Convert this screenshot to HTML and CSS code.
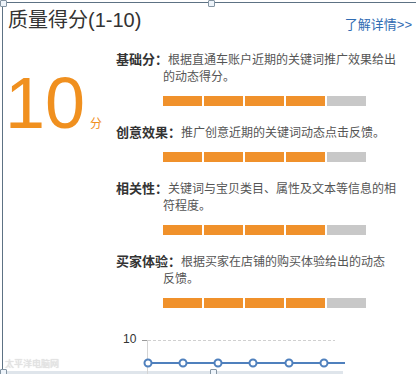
FILE: index.html
```html
<!DOCTYPE html>
<html lang="zh-CN">
<head>
    <meta charset="UTF-8">
    <meta name="viewport" content="width=device-width, initial-scale=1.0">
    <title>质量得分</title>
    <link rel="stylesheet" href="styles.css">
</head>
<body>

    <div class="frame">
        <span class="handle tl"></span>
        <span class="handle tm"></span>
        <span class="handle bl"></span>
        <span class="handle bm"></span>

        <div class="head">
            <h2 class="title">质量得分(1-10)</h2>
            <a class="more" href="#">了解详情&gt;&gt;</a>
        </div>

        <div class="main">
            <div class="score">10<span class="unit">分</span></div>

            <div class="items">
                <div class="item">
                    <p><b>基础分：</b>根据直通车账户近期的关键词推广效果给出的动态得分。</p>
                    <div class="bar"><i></i><i></i><i></i><i></i><i class="off"></i></div>
                </div>
                <div class="item">
                    <p><b>创意效果：</b>推广创意近期的关键词动态点击反馈。</p>
                    <div class="bar"><i></i><i></i><i></i><i></i><i class="off"></i></div>
                </div>
                <div class="item">
                    <p><b>相关性：</b>关键词与宝贝类目、属性及文本等信息的相符程度。</p>
                    <div class="bar"><i></i><i></i><i></i><i></i><i class="off"></i></div>
                </div>
                <div class="item">
                    <p><b>买家体验：</b>根据买家在店铺的购买体验给出的动态反馈。</p>
                    <div class="bar"><i></i><i></i><i></i><i></i><i class="off"></i></div>
                </div>
            </div>
        </div>

        <svg class="chart" width="340" height="53" viewBox="0 0 340 53">
            <text x="115" y="19">10</text>
            <line x1="134" y1="16.5" x2="139" y2="16.5" stroke="#999"/>
            <line x1="139.5" y1="16" x2="139.5" y2="53" stroke="#d4d4d4"/>
            <line x1="140" y1="16.5" x2="327" y2="16.5" stroke="#d0d0d0" stroke-dasharray="3 2"/>
            <line x1="140" y1="39" x2="337" y2="39" stroke="#4f80bd" stroke-width="2"/>
            <circle cx="140" cy="39" r="3.5"/>
            <circle cx="175" cy="39" r="3.5"/>
            <circle cx="210" cy="39" r="3.5"/>
            <circle cx="245" cy="39" r="3.5"/>
            <circle cx="281" cy="39" r="3.5"/>
            <circle cx="316" cy="39" r="3.5"/>
        </svg>

        <span class="mark">太平洋电脑网</span>
    </div>
    <div class="strip"></div>

</body>
</html>
```

FILE: styles.css
```css
body {
    margin: 0;
    font-family: "Liberation Sans", "Noto Sans CJK SC", sans-serif;
    background: #fff;
}

.frame {
    position: relative;
    box-sizing: border-box;
    height: 369px;
    margin: 2px 3px 0 2px;
    padding: 3px 4px 0 5px;
    border-top: 1px solid #5d7284;
    border-left: 1px solid #5d7284;
}

/* selection handles of the editor */
.handle {
    position: absolute;
    width: 5px;
    height: 5px;
    border: 1px solid #8595a3;
    border-radius: 1px;
    background: #eef4fa;
}

.tl { left: -3px; top: -3px; }
.tm { left: 205px; top: -3px; }
.bl { left: -3px; top: 366px; }
.bm { left: 207px; top: 366px; }

.head {
    display: flex;
    justify-content: space-between;
    align-items: flex-end;
    height: 28px;
}

.title {
    margin: 0;
    font-size: 20px;
    font-weight: normal;
    line-height: 28px;
    color: #333;
}

.more {
    font-size: 13px;
    line-height: 18px;
    color: #2f6cb3;
    text-decoration: none;
}

.main {
    display: flex;
    margin-top: 17px;
}

.score {
    width: 108px;
    padding-top: 16px;
    margin-left: -3px;
    font-size: 72px;
    line-height: 72px;
    color: #f0901f;
}

.unit {
    margin-left: 5px;
    font-size: 12px;
    line-height: 1;
}

.items {
    width: 280.6px;
    margin-left: 3px;
}

.item + .item {
    margin-top: 18px;
}

.item p {
    margin: 0;
    padding-left: 47px;
    text-indent: -47px;
    font-size: 12px;
    line-height: 17px;
    color: #555;
}

.item b {
    font-size: 13px;
    color: #333;
}

.bar {
    display: flex;
    gap: 2px;
    margin: 10px 0 0 47px;
}

.bar i {
    width: 39px;
    height: 10px;
    background: #f0912b;
}

.bar .off {
    background: #c8c8c8;
}

.chart {
    display: block;
    margin-top: 16px;
}

.chart text {
    font-family: "Liberation Sans", sans-serif;
    font-size: 12px;
    fill: #333;
}

.chart circle {
    fill: #fff;
    stroke: #4f80bd;
    stroke-width: 2;
}

.mark {
    position: absolute;
    left: 2px;
    top: 354px;
    font-size: 9px;
    color: #e4e4e4;
    text-shadow: 0 0 1px #ccc;
}

.strip {
    width: 343px;
    height: 3px;
    background: #dfe5eb;
}
```
